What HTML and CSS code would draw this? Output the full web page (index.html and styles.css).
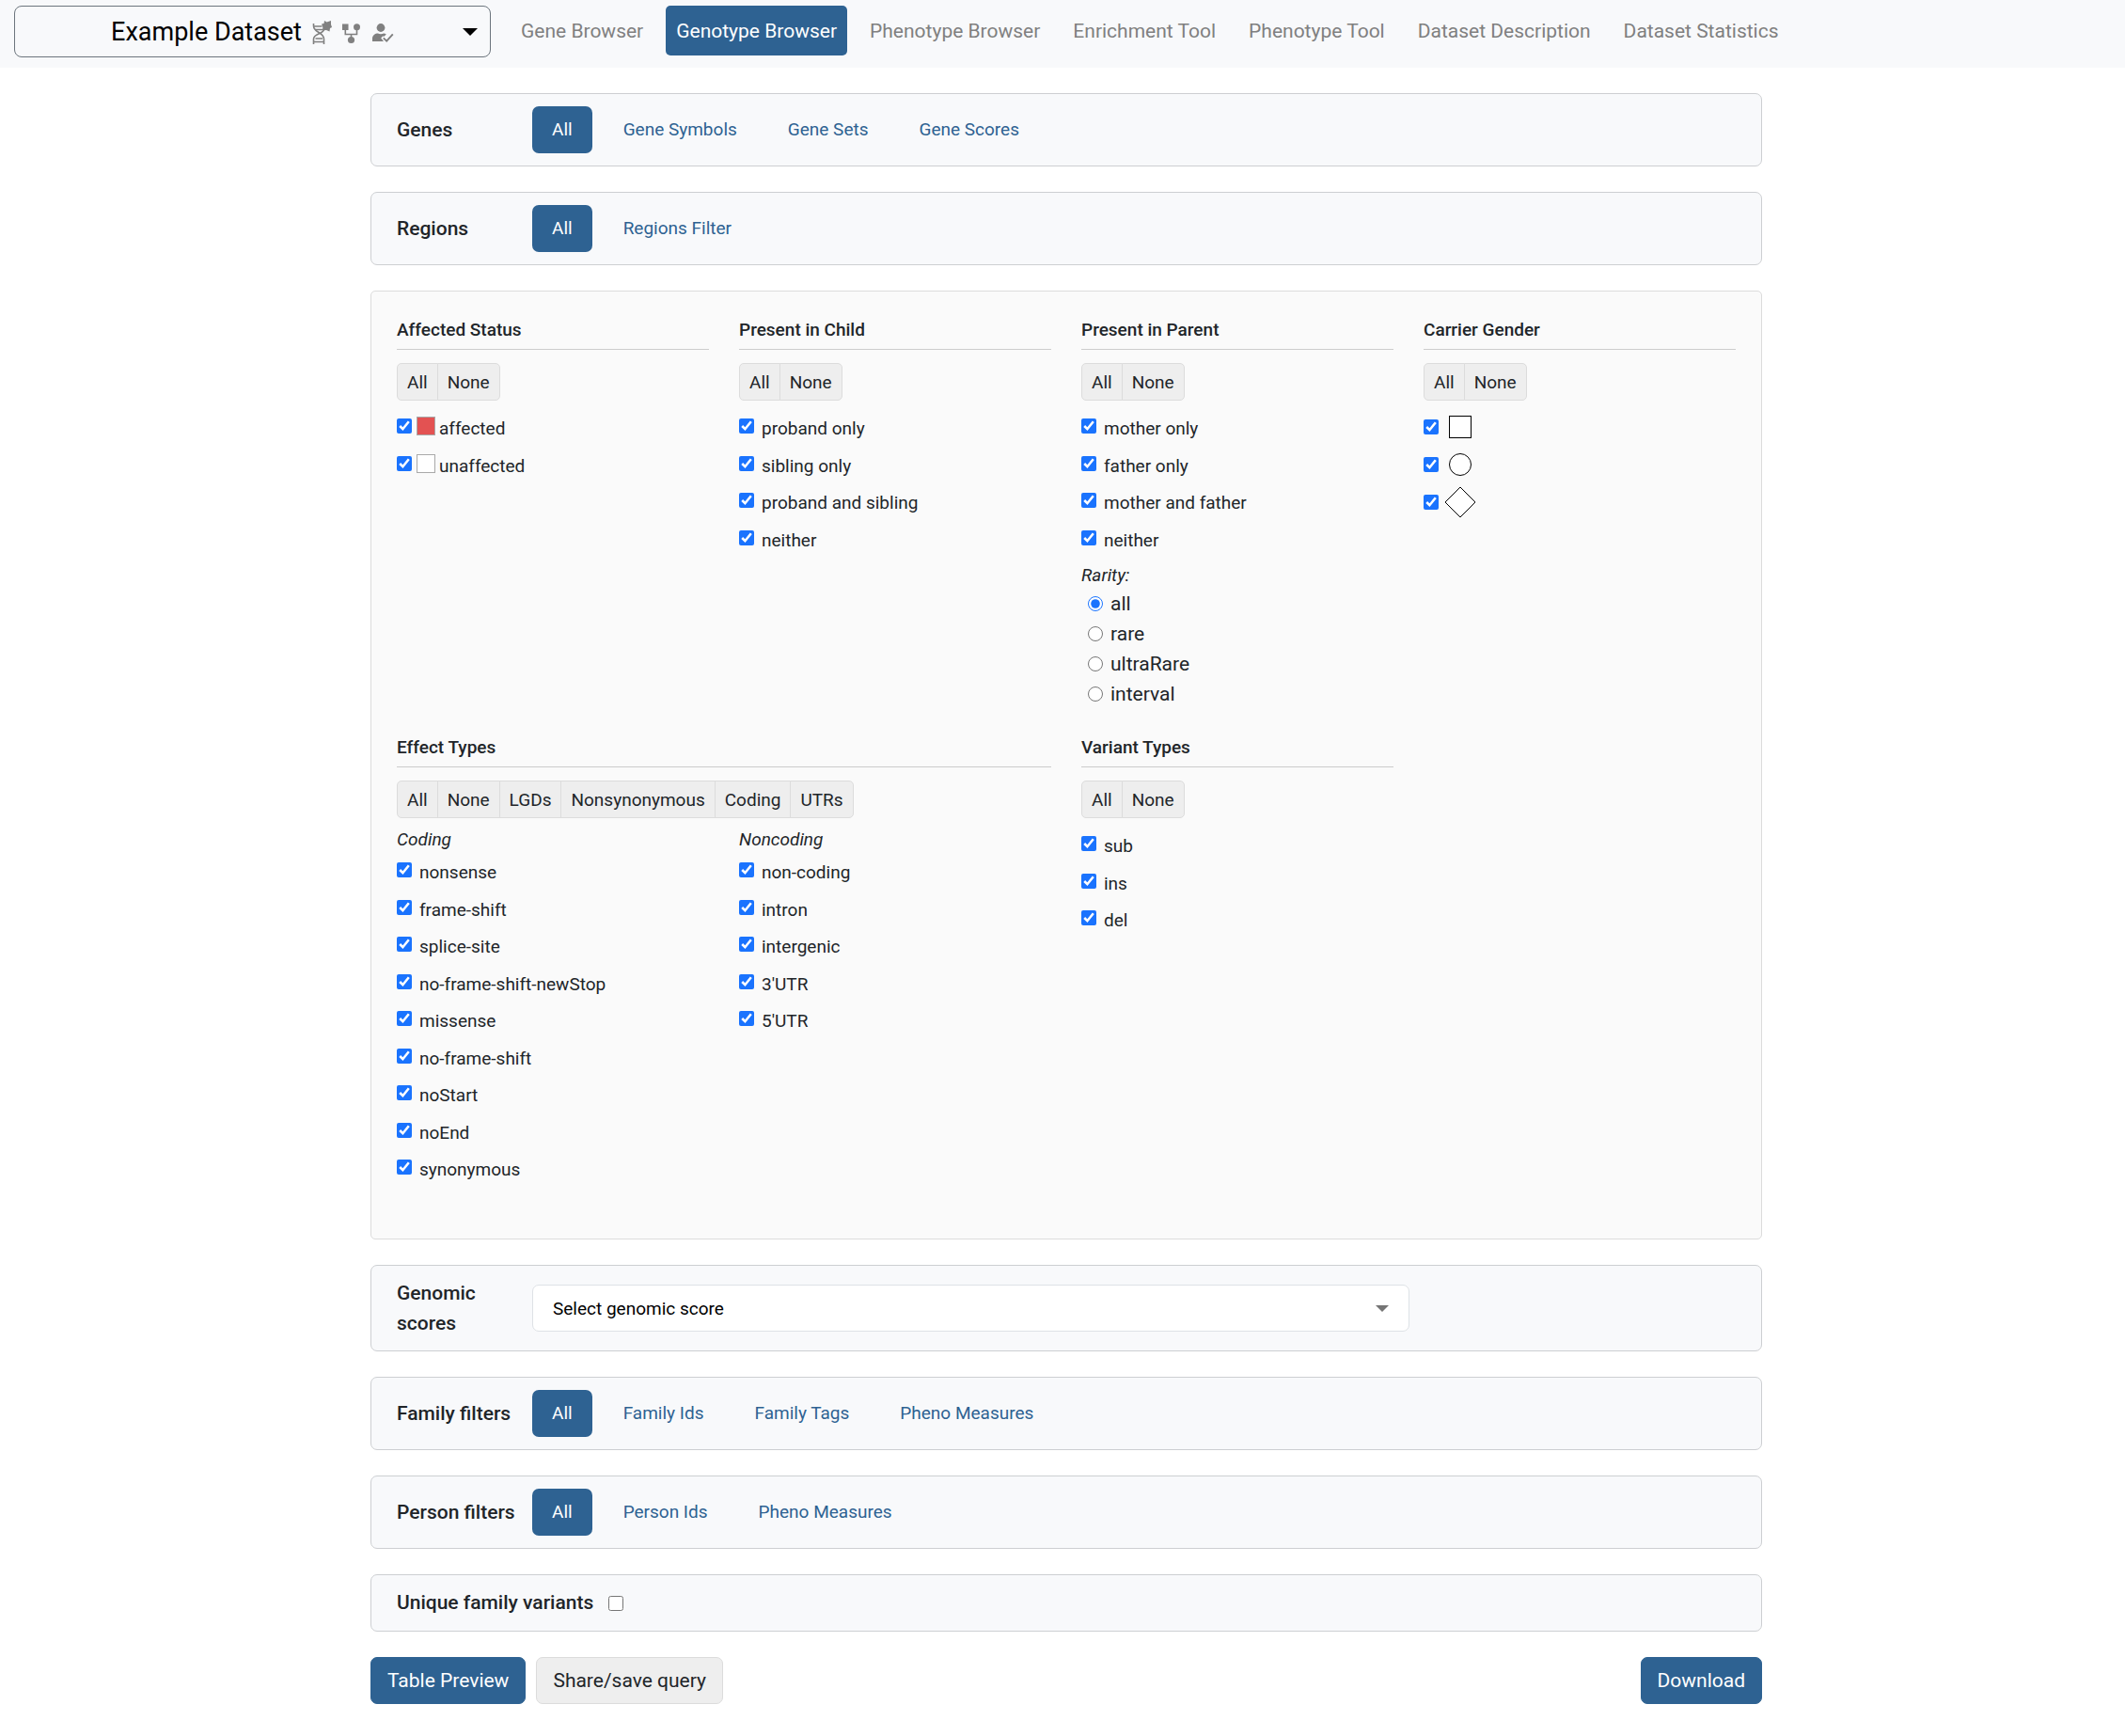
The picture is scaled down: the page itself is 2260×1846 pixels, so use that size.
FILE: index.html
```html
<!DOCTYPE html>
<html lang="en">
<head>
<meta charset="utf-8">
<meta name="viewport" content="width=device-width, initial-scale=1">
<title>Genotype Browser</title>
<link rel="stylesheet" href="styles.css">
</head>
<body>
<header class="topbar">
  <button type="button" class="dataset-select" aria-haspopup="listbox">
    <span class="dataset-name">Example Dataset</span>
    <svg class="dataset-icon" width="22" height="28" viewBox="0 0 22 28" aria-hidden="true">
      <g fill="none" stroke="#808080" stroke-width="1.600">
        <path d="M2.500 5v2.500c0 7.500 11 6.500 11 14V27M13.500 11c0 5.500-11 4-11 10.500V27"/>
        <path d="M2.500 8h9M4 11.500h8M4.500 21h7.500M2.500 24.500h11" stroke-width="1.300"/>
      </g>
      <path d="M14 2l2.500 1.500L21 2v4l1 3-2 1-.5 3.500-3.500-1.500-4 .5.300-3.500L11 5.500l2.500-.5z" fill="#808080"/>
    </svg>
    <svg class="dataset-icon" width="22" height="28" viewBox="0 0 22 28" aria-hidden="true">
      <g fill="#808080"><rect x="1" y="5.500" width="6.500" height="6.500"/><circle cx="16.500" cy="8.800" r="3.500"/><circle cx="10.500" cy="22.500" r="3.600"/></g>
      <path d="M4.300 12v4.500h12.200v-5M10.500 16.500v4" fill="none" stroke="#808080" stroke-width="1.600"/>
    </svg>
    <svg class="dataset-icon" width="24" height="28" viewBox="0 0 24 28" aria-hidden="true">
      <g fill="#808080"><circle cx="10" cy="9.500" r="4.400"/><path d="M1 24v-3c0-3.500 3-5.500 6-5.500 1.500 1 4.500 1 6 0 1 0 2 .3 2.800 1l-2.300 2.300-1.500-.3-1.800 2L13 24z"/></g>
      <path d="M12.800 20.300l3.400 3.400 6.600-7.400" fill="none" stroke="#808080" stroke-width="1.900"/>
    </svg>
    <svg class="dataset-caret" width="16" height="8" viewBox="0 0 16 8" aria-hidden="true"><path d="M0 0h16L8 8z"/></svg>
  </button>
  <nav class="tabs" aria-label="Tools">
    <a class="tab" href="#">Gene Browser</a>
    <a class="tab active" href="#" aria-current="page">Genotype Browser</a>
    <a class="tab" href="#">Phenotype Browser</a>
    <a class="tab" href="#">Enrichment Tool</a>
    <a class="tab" href="#">Phenotype Tool</a>
    <a class="tab" href="#">Dataset Description</a>
    <a class="tab" href="#">Dataset Statistics</a>
  </nav>
</header>

<main class="page">
  <section class="card">
    <h2 class="card-label">Genes</h2>
    <nav class="pills" aria-label="Genes">
      <a class="pill active" href="#">All</a>
      <a class="pill" href="#">Gene Symbols</a>
      <a class="pill" href="#">Gene Sets</a>
      <a class="pill" href="#">Gene Scores</a>
    </nav>
  </section>

  <section class="card">
    <h2 class="card-label">Regions</h2>
    <nav class="pills" aria-label="Regions">
      <a class="pill active" href="#">All</a>
      <a class="pill" href="#">Regions Filter</a>
    </nav>
  </section>

  <section class="panel">
    <div class="block">
      <h3 class="block-title">Affected Status</h3>
      <div class="btn-group"><button type="button">All</button><button type="button">None</button></div>
      <ul class="checks">
        <li><label class="tight"><input type="checkbox" checked><span class="swatch red"></span><span>affected</span></label></li>
        <li><label class="tight"><input type="checkbox" checked><span class="swatch"></span><span>unaffected</span></label></li>
      </ul>
    </div>

    <div class="block">
      <h3 class="block-title">Present in Child</h3>
      <div class="btn-group"><button type="button">All</button><button type="button">None</button></div>
      <ul class="checks">
        <li><label><input type="checkbox" checked><span>proband only</span></label></li>
        <li><label><input type="checkbox" checked><span>sibling only</span></label></li>
        <li><label><input type="checkbox" checked><span>proband and sibling</span></label></li>
        <li><label><input type="checkbox" checked><span>neither</span></label></li>
      </ul>
    </div>

    <div class="block">
      <h3 class="block-title">Present in Parent</h3>
      <div class="btn-group"><button type="button">All</button><button type="button">None</button></div>
      <ul class="checks">
        <li><label><input type="checkbox" checked><span>mother only</span></label></li>
        <li><label><input type="checkbox" checked><span>father only</span></label></li>
        <li><label><input type="checkbox" checked><span>mother and father</span></label></li>
        <li><label><input type="checkbox" checked><span>neither</span></label></li>
      </ul>
      <div class="rarity" role="radiogroup" aria-labelledby="rarity-title">
        <div class="subtitle" id="rarity-title">Rarity:</div>
        <label class="radio"><input type="radio" name="rarity" checked><span>all</span></label>
        <label class="radio"><input type="radio" name="rarity"><span>rare</span></label>
        <label class="radio"><input type="radio" name="rarity"><span>ultraRare</span></label>
        <label class="radio"><input type="radio" name="rarity"><span>interval</span></label>
      </div>
    </div>

    <div class="block">
      <h3 class="block-title">Carrier Gender</h3>
      <div class="btn-group"><button type="button">All</button><button type="button">None</button></div>
      <ul class="genders">
        <li><label><input type="checkbox" checked aria-label="male"><svg width="36" height="36" viewBox="0 0 36 36" aria-hidden="true"><rect x="6.500" y="6.500" width="23" height="23"/></svg></label></li>
        <li><label><input type="checkbox" checked aria-label="female"><svg width="36" height="36" viewBox="0 0 36 36" aria-hidden="true"><circle cx="18" cy="18" r="11.500"/></svg></label></li>
        <li><label><input type="checkbox" checked aria-label="unspecified"><svg width="36" height="36" viewBox="0 0 36 36" aria-hidden="true"><path d="M18 2L34 18 18 34 2 18z"/></svg></label></li>
      </ul>
    </div>

    <div class="block wide">
      <h3 class="block-title">Effect Types</h3>
      <div class="btn-group"><button type="button">All</button><button type="button">None</button><button type="button">LGDs</button><button type="button">Nonsynonymous</button><button type="button">Coding</button><button type="button">UTRs</button></div>
      <div class="effects">
        <div>
          <div class="subtitle">Coding</div>
          <ul class="checks flush">
            <li><label><input type="checkbox" checked><span>nonsense</span></label></li>
            <li><label><input type="checkbox" checked><span>frame-shift</span></label></li>
            <li><label><input type="checkbox" checked><span>splice-site</span></label></li>
            <li><label><input type="checkbox" checked><span>no-frame-shift-newStop</span></label></li>
            <li><label><input type="checkbox" checked><span>missense</span></label></li>
            <li><label><input type="checkbox" checked><span>no-frame-shift</span></label></li>
            <li><label><input type="checkbox" checked><span>noStart</span></label></li>
            <li><label><input type="checkbox" checked><span>noEnd</span></label></li>
            <li><label><input type="checkbox" checked><span>synonymous</span></label></li>
          </ul>
        </div>
        <div>
          <div class="subtitle">Noncoding</div>
          <ul class="checks flush">
            <li><label><input type="checkbox" checked><span>non-coding</span></label></li>
            <li><label><input type="checkbox" checked><span>intron</span></label></li>
            <li><label><input type="checkbox" checked><span>intergenic</span></label></li>
            <li><label><input type="checkbox" checked><span>3'UTR</span></label></li>
            <li><label><input type="checkbox" checked><span>5'UTR</span></label></li>
          </ul>
        </div>
      </div>
    </div>

    <div class="block">
      <h3 class="block-title">Variant Types</h3>
      <div class="btn-group"><button type="button">All</button><button type="button">None</button></div>
      <ul class="checks">
        <li><label><input type="checkbox" checked><span>sub</span></label></li>
        <li><label><input type="checkbox" checked><span>ins</span></label></li>
        <li><label><input type="checkbox" checked><span>del</span></label></li>
      </ul>
    </div>
  </section>

  <section class="card">
    <label class="card-label" for="score">Genomic scores</label>
    <div class="score-field">
      <select id="score"><option>Select genomic score</option></select>
      <svg class="score-caret" width="14" height="7" viewBox="0 0 14 7" aria-hidden="true"><path d="M0 0h14L7 7z"/></svg>
    </div>
  </section>

  <section class="card">
    <h2 class="card-label">Family filters</h2>
    <nav class="pills" aria-label="Family filters">
      <a class="pill active" href="#">All</a>
      <a class="pill" href="#">Family Ids</a>
      <a class="pill" href="#">Family Tags</a>
      <a class="pill" href="#">Pheno Measures</a>
    </nav>
  </section>

  <section class="card">
    <h2 class="card-label">Person filters</h2>
    <nav class="pills" aria-label="Person filters">
      <a class="pill active" href="#">All</a>
      <a class="pill" href="#">Person Ids</a>
      <a class="pill" href="#">Pheno Measures</a>
    </nav>
  </section>

  <section class="card">
    <label class="unique">Unique family variants <input type="checkbox"></label>
  </section>

  <div class="actions">
    <button type="button" class="action primary">Table Preview</button>
    <button type="button" class="action">Share/save query</button>
    <button type="button" class="action primary download">Download</button>
  </div>
</main>
</body>
</html>
```

FILE: styles.css
```css
* {
  box-sizing: border-box;
}

body {
  margin: 0;
  background: #fff;
  color: #212529;
  font-family: Roboto, "Liberation Sans", sans-serif;
  font-size: 19px;
  line-height: 28px;
}

h2, h3, ul {
  margin: 0;
  padding: 0;
}

ul {
  list-style: none;
}

a {
  text-decoration: none;
}

button, select {
  font-family: inherit;
}

input {
  width: 16px;
  height: 16px;
  margin: 0;
  flex: none;
  accent-color: #1a73fe;
}

/* Top bar */
.topbar {
  display: flex;
  align-items: flex-start;
  gap: 21px;
  padding: 6px 15px 11px;
  background: #f8f9fb;
}

.dataset-select {
  position: relative;
  display: flex;
  align-items: center;
  justify-content: center;
  gap: 10px;
  width: 507px;
  height: 55px;
  padding: 0;
  border: 1px solid #6c757d;
  border-radius: 8px;
  background: transparent;
  color: #000;
  font-size: 27px;
}

.dataset-caret {
  position: absolute;
  right: 13px;
  top: 23px;
}

.tabs {
  display: flex;
  gap: 13px;
}

.tab {
  padding: 2px 11px 0;
  border-radius: 5px;
  color: #808080;
  font-size: 21px;
  line-height: 51px;
  white-space: nowrap;
}

.tab.active {
  background: #2e6292;
  color: #fff;
}

/* Page column */
.page {
  display: flex;
  flex-direction: column;
  gap: 27px;
  max-width: 1488px;
  margin: 0 auto;
  padding: 27px 0 27px 8px;
}

.card {
  display: flex;
  align-items: center;
  padding: 13px 27px;
  border: 1px solid #cdcfd2;
  border-radius: 7px;
  background: #f8f9fb;
}

.card-label {
  flex: none;
  width: 144px;
  padding-right: 12px;
  font-size: 21px;
  font-weight: 500;
  line-height: 32px;
}

.card h2.card-label {
  padding-right: 0;
}

.pills {
  display: flex;
  gap: 12px;
}

.pill {
  padding: 0 21px;
  border-radius: 7px;
  color: #2e6292;
  line-height: 50px;
}

.pill.active {
  background: #2e6292;
  color: #fff;
}

/* Variant filters */
.panel {
  display: grid;
  grid-template-columns: repeat(4, minmax(0, 1fr));
  gap: 27px 32px;
  padding: 27px 27px 54px;
  border: 1px solid #dcdcdc;
  border-radius: 5px;
  background: #fafafa;
}

.wide {
  grid-column: span 2;
}

.block-title {
  margin-bottom: 14px;
  padding-bottom: 6px;
  border-bottom: 1px solid #cccccc;
  font-size: 19px;
  font-weight: 500;
}

.btn-group {
  display: flex;
}

.btn-group button {
  height: 40px;
  margin: 0 0 0 -1px;
  padding: 0 10px;
  border: 1px solid #dcdcdc;
  background: #eeeeee;
  color: #212529;
  font-size: 19px;
}

.btn-group button:first-child {
  margin-left: 0;
  border-radius: 5px 0 0 5px;
}

.btn-group button:last-child {
  border-radius: 0 5px 5px 0;
}

.checks, .effects {
  margin-top: 9px;
}

.genders {
  margin-top: 8px;
}

.checks.flush {
  margin-top: 0;
}

.checks li {
  height: 40px;
}

.checks li:nth-child(even) {
  height: 39px;
}

.checks label {
  display: inline-flex;
  align-items: center;
  gap: 8px;
  height: 36px;
}

.checks label span:last-child {
  padding-top: 5px;
}

.checks label.tight {
  gap: 4px;
}

.swatch {
  width: 20px;
  height: 20px;
  margin-left: 1px;
  border: 1px solid #a9a9a9;
  background: #fff;
}

.swatch.red {
  background: #e35252;
}

.genders label {
  display: inline-flex;
  align-items: center;
  gap: 5px;
  height: 40px;
}

.genders li {
  height: 40px;
}

.genders svg {
  fill: #fff;
  stroke: #000;
}

.subtitle {
  font-style: italic;
}

.rarity {
  display: flex;
  flex-direction: column;
  align-items: flex-start;
  padding-top: 5px;
}

.radio {
  display: flex;
  align-items: center;
  gap: 8px;
  margin-left: 7px;
  font-size: 21px;
  line-height: 32px;
}

.effects {
  display: grid;
  grid-template-columns: repeat(2, minmax(0, 1fr));
  gap: 32px;
}

/* Genomic scores */
.score-field {
  position: relative;
  flex: 1;
  max-width: 933px;
}

.score-field select {
  appearance: none;
  display: block;
  width: 100%;
  height: 50px;
  padding: 0 21px;
  border: 1px solid #dee2e6;
  border-radius: 7px;
  background: #fff;
  color: #000;
  font-size: 19px;
}

.score-caret {
  position: absolute;
  right: 22px;
  top: 22px;
  fill: #757575;
}

/* Bottom rows */
.unique {
  display: flex;
  align-items: center;
  gap: 16px;
  font-size: 21px;
  font-weight: 500;
  line-height: 33px;
}

.actions {
  display: flex;
  gap: 11px;
}

.action {
  height: 50px;
  padding: 0 17px;
  border: 1px solid #dcdcdc;
  border-radius: 7px;
  background: #eeeeee;
  color: #212529;
  font-size: 21px;
}

.action.primary {
  border-color: #2e6292;
  background: #2e6292;
  color: #fff;
}

.download {
  margin-left: auto;
}
```
